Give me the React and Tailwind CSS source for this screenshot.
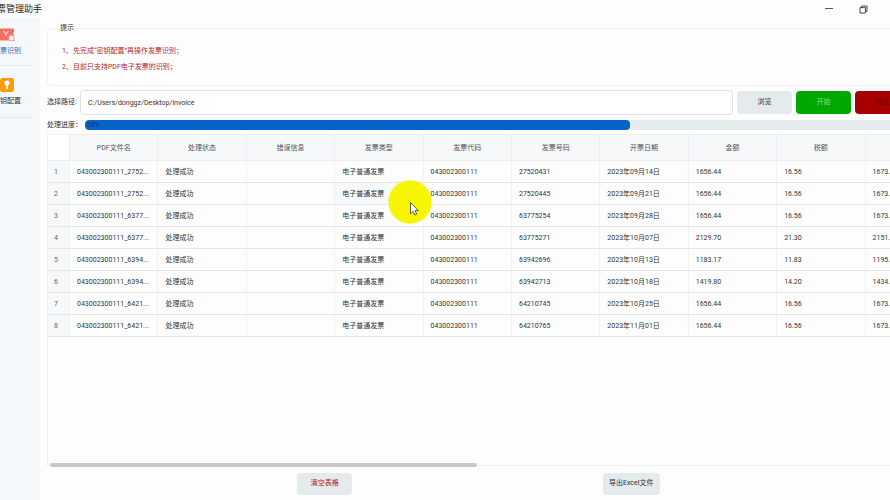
const COLUMNS = ["PDF文件名", "处理状态", "错误信息", "发票类型", "发票代码", "发票号码", "开票日期", "金额", "税额", "价税合计"];

const CODE = "043002300111";

const INVOICES = [
  { file: "043002300111_27520431.pdf", number: "27520431", date: "2023年09月14日", amount: "1656.44", tax: "16.56", total: "1673.00" },
  { file: "043002300111_27520445.pdf", number: "27520445", date: "2023年09月21日", amount: "1656.44", tax: "16.56", total: "1673.00" },
  { file: "043002300111_63775254.pdf", number: "63775254", date: "2023年09月28日", amount: "1656.44", tax: "16.56", total: "1673.00" },
  { file: "043002300111_63775271.pdf", number: "63775271", date: "2023年10月07日", amount: "2129.70", tax: "21.30", total: "2151.00" },
  { file: "043002300111_63942696.pdf", number: "63942696", date: "2023年10月13日", amount: "1183.17", tax: "11.83", total: "1195.00" },
  { file: "043002300111_63942713.pdf", number: "63942713", date: "2023年10月18日", amount: "1419.80", tax: "14.20", total: "1434.00" },
  { file: "043002300111_64210745.pdf", number: "64210745", date: "2023年10月25日", amount: "1656.44", tax: "16.56", total: "1673.00" },
  { file: "043002300111_64210765.pdf", number: "64210765", date: "2023年11月01日", amount: "1656.44", tax: "16.56", total: "1673.00" },
];

// file names keep the code and four digits, then an ellipsis
const shorten = (name) => `${name.slice(0, 17)}...`;

function InvoiceIcon() {
  return (
    <svg viewBox="0 0 16 14" className="h-[14px] w-4" aria-hidden="true">
      <path d="M1 .5h13a1 1 0 0 1 1 1v2.6a1.4 1.4 0 0 0 0 2.6v4.8a1 1 0 0 1-1 1H1z" fill="#f2705f" />
      <path d="M4.6 3.2 7 6l2.4-2.8M7 6v2" stroke="#fde3de" strokeWidth="1.1" fill="none" />
      <circle cx="12.4" cy="10" r="2.9" fill="#fdeeec" stroke="#f58f82" strokeWidth=".8" />
      <path d="m14.4 12 1.2 1.4" stroke="#f2705f" strokeWidth=".9" />
    </svg>
  );
}

function KeyIcon() {
  return (
    <svg viewBox="0 0 14 14" className="h-[14px] w-[14px]" aria-hidden="true">
      <rect width="14" height="14" rx="2.5" fill="#fb9a0c" />
      <circle cx="7" cy="5" r="2.6" fill="#fff" />
      <path d="M6.2 6.5h1.6v4.8H6.2z" fill="#fff" />
    </svg>
  );
}

function TitleBar() {
  return (
    <header className="flex h-[18px] shrink-0 items-center justify-between">
      <h1 className="-ml-3 whitespace-nowrap text-[9px] leading-4 text-[#222]">发票管理助手</h1>
      <div className="flex items-center gap-[22px] pr-[21px]">
        <button type="button" aria-label="最小化" className="flex h-4 w-3 items-center justify-center">
          <svg viewBox="0 0 8 8" className="h-2 w-2" stroke="#555" fill="none"><path d="M0 3.5h8" /></svg>
        </button>
        <button type="button" aria-label="还原" className="flex h-4 w-3 items-center justify-center">
          <svg viewBox="0 0 9 9" className="h-[9px] w-[9px]" stroke="#333" strokeWidth=".9" fill="none">
            <path d="M1 2.6h5.4V8H1zM2.6 2.4V1H8v5.4H6.6" />
          </svg>
        </button>
      </div>
    </header>
  );
}

function Sidebar() {
  return (
    <nav className="flex w-10 shrink-0 flex-col overflow-hidden bg-[#f5f8fa]">
      <a href="#invoice" className="-ml-[13px] flex h-12 w-[45px] flex-col items-center gap-[3px] border-b border-[#e6eaec] pr-[5px] pt-[10px] text-[7px] leading-3 text-[#2a6fbe]">
        <InvoiceIcon />
        <span className="whitespace-nowrap">发票识别</span>
      </a>
      <a href="#key" className="-ml-[13px] flex h-[52px] w-[45px] flex-col items-center gap-[3px] border-b border-[#e6eaec] pr-[5px] pt-3 text-[7px] leading-3 text-[#333]">
        <KeyIcon />
        <span className="whitespace-nowrap">密钥配置</span>
      </a>
    </nav>
  );
}

function Hints() {
  return (
    <fieldset className="rounded-sm border border-[#eff1f3] pb-[10px] pl-[14px]">
      <legend className="-ml-1 px-[2px] text-[7px] leading-[10px] text-[#333]">提示</legend>
      <ol className="pt-[10px] text-[7px] leading-4 text-[#b52a2a]">
        <li>1、先完成“密钥配置”再操作发票识别；</li>
        <li>2、目前只支持PDF电子发票的识别；</li>
      </ol>
    </fieldset>
  );
}

function InvoiceTable() {
  return (
    <div className="min-h-0 flex-1 overflow-hidden border-l border-t border-b border-[#eceff1]">
      <table className="w-[906px] table-fixed border-separate border-spacing-0 text-left text-[7px] leading-[10px] text-[#333]">
        <thead>
          <tr className="h-[26px] bg-[#f6f8fa] text-[#555]">
            <td className="w-[22px] border-r border-b border-[#eceff1] bg-white" />
            {COLUMNS.map((c) => (
              <th key={c} scope="col" className="border-r border-b border-[#eceff1] p-0 text-center font-normal">{c}</th>
            ))}
          </tr>
        </thead>
        <tbody>
          {INVOICES.map((inv, i) => (
            <tr key={inv.number} className="h-[22px] *:border-r *:border-b *:border-r-[#f0f2f4] *:border-b-[#e4e6e8] *:py-0">
              <th scope="row" className="bg-[#f6f8fa] pl-[6px] font-normal text-[#666]">{i + 1}</th>
              <td className="overflow-hidden whitespace-nowrap pl-[7px]">{shorten(inv.file)}</td>
              <td className="pl-[7px]">处理成功</td>
              <td />
              <td className={i === 1 ? "bg-[#f6f8fa] pl-[7px]" : "pl-[7px]"}>电子普通发票</td>
              <td className="pl-[7px]">{CODE}</td>
              <td className="pl-[7px]">{inv.number}</td>
              <td className="pl-[7px]">{inv.date}</td>
              <td className="pl-[7px]">{inv.amount}</td>
              <td className="pl-[7px]">{inv.tax}</td>
              <td className="pl-[7px]">{inv.total}</td>
            </tr>
          ))}
        </tbody>
      </table>
    </div>
  );
}

// highlighted mouse pointer that floats over the window
function Pointer() {
  return (
    <svg viewBox="0 0 44 44" className="pointer-events-none absolute left-[388px] top-[180px] h-11 w-11" aria-hidden="true">
      <circle cx="22" cy="22" r="21.7" fill="#f6f600" />
      <path d="M22.5 22.5v11.2l2.6-2.3 1.8 3.7 1.8-.9-1.7-3.6h3.4z" fill="#fff" stroke="#333" strokeWidth=".8" />
    </svg>
  );
}

export default function App() {
  return (
    <div className="relative flex h-screen flex-col overflow-hidden bg-[#fdfdfe] font-[Roboto,'Noto_Sans_CJK_SC',sans-serif]">
      <TitleBar />
      <div className="flex min-h-0 flex-1">
        <Sidebar />
        <main className="flex min-w-0 flex-1 flex-col overflow-hidden pl-[7px] text-[7px] text-[#333]">
          {/* the content runs past the right edge of the window */}
          <div className="-mr-5 flex min-h-0 flex-1 flex-col pt-[5px]">
            <Hints />
            <div className="mt-1 flex h-[25px] items-center gap-1">
              <label htmlFor="path" className="w-[29px] whitespace-nowrap">选择路径:</label>
              <input id="path" defaultValue="C:/Users/donggz/Desktop/invoice" className="h-[25px] min-w-0 flex-1 rounded-sm border border-[#dfe1e6] bg-white px-[7px] text-[7px]" />
              <button type="button" className="h-[23px] w-[55px] rounded-sm bg-[#e5eaec]">浏览</button>
              <button type="button" className="h-[23px] w-[55px] rounded-sm bg-[#00a800] text-[#8fdc8f]">开始</button>
              <button type="button" className="h-[23px] w-[55px] rounded-sm bg-[#a80000] text-[#5a0808]">停止</button>
            </div>
            <div className="mt-1 flex h-3 items-center gap-1">
              <span id="progress-label" className="w-[34px] whitespace-nowrap">处理进度：</span>
              <div role="progressbar" aria-labelledby="progress-label" aria-valuenow={66} className="h-[10px] flex-1 overflow-hidden rounded-sm bg-[#e5eaec]">
                <div className="h-full w-[66%] rounded-sm bg-[#0564c8] pl-[2px] text-[7px] leading-[10px] text-[#0a3a78]">66%</div>
              </div>
            </div>
            <div className="mt-[3px] flex min-h-0 flex-1 flex-col">
              <InvoiceTable />
              <div className="z-10 -mt-[3px] ml-[3px] mr-[7px] h-1 shrink-0">
                <div className="h-full w-1/2 rounded-full bg-[#c8c8c8]" />
              </div>
            </div>
            <div className="flex h-[33px] shrink-0 items-center justify-evenly">
              <button type="button" className="h-[22px] w-[55px] rounded-sm bg-[#e5eaec] text-[#b0182a]">清空表格</button>
              <button type="button" className="h-[22px] w-[57px] rounded-sm bg-[#e5eaec]">导出Excel文件</button>
            </div>
          </div>
        </main>
      </div>
      <Pointer />
    </div>
  );
}
